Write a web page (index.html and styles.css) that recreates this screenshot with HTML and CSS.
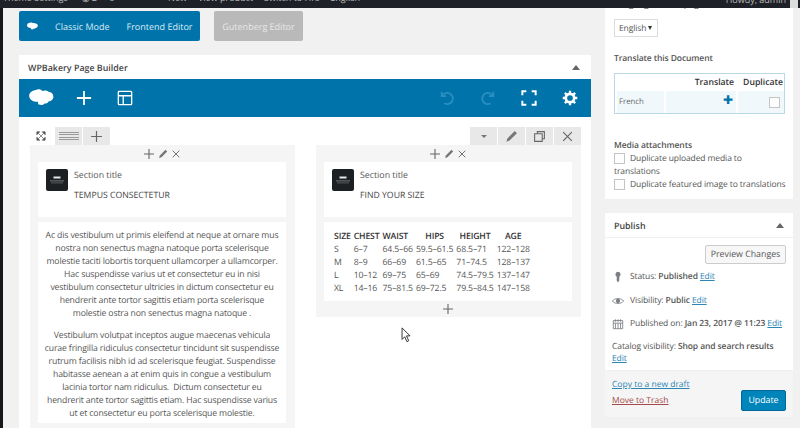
FILE: index.html
```html
<!DOCTYPE html>
<html lang="en">
<head>
<meta charset="utf-8">
<title>Edit product</title>
<link rel="stylesheet" href="styles.css">
</head>
<body>
<svg width="0" height="0" class="defs">
  <symbol id="cloud" viewBox="0 0 26 20"><path d="M7 1c2.500-1.300 5.500-.8 7 1 2-1 5-.6 6.500 1 3 .2 5 2.400 5 5.200 0 2.800-2.300 4.800-5 4.800-.6 2-2.500 2.600-4 2-1 1.500-3.500 2.500-6 1.400-2-.2-.5-2.600-1.500-3C4 13.400 0 11 0 7c0-3 3-5.500 7-6z"/></symbol>
  <symbol id="pencil" viewBox="0 0 12 12"><path d="M9 1l2 2-6.800 6.800-2.900 1 .9-3z"/></symbol>
  <symbol id="plus" viewBox="0 0 12 12"><path d="M6 1v10M1 6h10" fill="none" stroke="currentColor" stroke-width="1.100"/></symbol>
  <symbol id="cross" viewBox="0 0 12 12"><path d="M2 2l8 8M10 2l-8 8" fill="none" stroke="currentColor" stroke-width="1.100"/></symbol>
  <symbol id="tile" viewBox="0 0 22 22"><rect width="22" height="22" rx="2" fill="#1d2022"/><rect x="7.500" y="7.500" width="7" height="2" fill="#e6e6e6"/><rect x="4" y="11.500" width="14" height=".8" fill="#8a8a8a"/><rect x="5" y="13.500" width="12" height=".8" fill="#666"/></symbol>
</svg>

<div class="adminbar">
  <div class="ab-left"><span class="ab-theme">Theme Settings</span><span class="ab-count">◉ 2 ✎ 0</span><span>+ New</span><span>View product</span><span>Switch to Hrs</span><span>English</span></div>
  <div class="ab-right"><span>Howdy, admin</span><i class="avatar"></i></div>
</div>
<div class="edgebar"></div>

<div class="layout">
  <main class="main">
    <div class="modes">
      <div class="mode-blue">
        <svg class="mode-logo"><use href="#cloud"/></svg>
        <span>Classic Mode</span><span>Frontend Editor</span>
      </div>
      <div class="mode-gray">Gutenberg Editor</div>
    </div>

    <section class="builder">
      <header class="builder-head"><h2>WPBakery Page Builder</h2><span class="tri"></span></header>
      <div class="toolbar">
        <div class="tools">
          <svg class="tb-logo" fill="#fff"><use href="#cloud"/></svg>
          <svg class="tb-ic" viewBox="0 0 18 18"><path d="M9 1v16M1 9h16" stroke="#fff" stroke-width="2" fill="none"/></svg>
          <svg class="tb-ic tb-layout" viewBox="0 0 18 18"><path d="M2.500 1.500h13a1 1 0 0 1 1 1v13a1 1 0 0 1-1 1h-13a1 1 0 0 1-1-1v-13a1 1 0 0 1 1-1zM1.500 6.500h15M7 6.500v10" stroke="#fff" stroke-width="1.500" fill="none"/></svg>
        </div>
        <div class="tools tools-right">
          <svg class="tb-ic dim" viewBox="0 0 18 18"><path d="M3 2v5h5M3.500 7A6.300 6.300 0 1 1 6 15" stroke="#2a8fc0" stroke-width="2" fill="none"/></svg>
          <svg class="tb-ic dim" viewBox="0 0 18 18"><path d="M15 2v5h-5M14.500 7A6.300 6.300 0 1 0 12 15" stroke="#2a8fc0" stroke-width="2" fill="none"/></svg>
          <svg class="tb-ic" viewBox="0 0 18 18"><path d="M1.500 6V1.500H6M12 1.500h4.500V6M16.500 12v4.500H12M6 16.500H1.500V12" stroke="#fff" stroke-width="2.200" fill="none"/></svg>
          <svg class="tb-ic" viewBox="0 0 18 18"><circle cx="9" cy="9" r="4.700" fill="none" stroke="#fff" stroke-width="3"/><path d="M9 .8v3M9 14.200v3M.8 9h3M14.200 9h3M3.200 3.200l2.100 2.100M12.700 12.700l2.100 2.100M14.800 3.200l-2.100 2.100M5.300 12.700l-2.100 2.100" stroke="#fff" stroke-width="2.600"/></svg>
        </div>
      </div>

      <div class="canvas">
        <div class="row-controls">
          <div class="rc-left">
            <svg class="rc-expand" viewBox="0 0 12 12"><path d="M1 1h3.500L1 4.500zM11 1v3.500L7.500 1zM1 11V7.500L4.500 11zM11 11H7.500L11 7.500zM3 3l6 6M9 3l-6 6" fill="#555" stroke="#555" stroke-width=".8"/></svg>
            <span class="rc-btn rc-wide"><i class="bars"></i><i class="bars"></i></span>
            <span class="rc-btn"><svg class="ic13"><use href="#plus"/></svg></span>
          </div>
          <div class="rc-right">
            <span class="rc-btn"><i class="caret"></i></span>
            <span class="rc-btn"><svg class="ic13 gray-fill"><use href="#pencil"/></svg></span>
            <span class="rc-btn"><svg class="ic13" viewBox="0 0 12 12"><path d="M4 3V1.500h6.500V8H9M1.500 3.500H8.500V10.500H1.500z" fill="none" stroke="currentColor"/></svg></span>
            <span class="rc-btn"><svg class="ic13"><use href="#cross"/></svg></span>
          </div>
        </div>

        <div class="columns">
          <div class="col col-left">
            <div class="col-tools"><svg class="ic12"><use href="#plus"/></svg><svg class="ic10 gray-fill"><use href="#pencil"/></svg><svg class="ic10"><use href="#cross"/></svg></div>
            <div class="card title-card">
              <svg class="tile"><use href="#tile"/></svg>
              <div><div class="sec-name">Section title</div><div class="sec-sub">TEMPUS CONSECTETUR</div></div>
            </div>
            <div class="card text-card">
              <p>Ac dis vestibulum ut primis eleifend at neque at ornare mus nostra non senectus magna natoque porta scelerisque molestie taciti lobortis torquent ullamcorper a ullamcorper. Hac suspendisse varius ut et consectetur eu in nisi vestibulum consectetur ultricies in dictum consectetur eu hendrerit ante tortor sagittis etiam porta scelerisque molestie ostra non senectus magna natoque .</p>
              <p>Vestibulum volutpat inceptos augue maecenas vehicula curae fringilla ridiculus consectetur tincidunt sit suspendisse rutrum facilisis nibh id ad scelerisque feugiat. Suspendisse habitasse aenean a at enim quis in congue a vestibulum lacinia tortor nam ridiculus.&nbsp; Dictum consectetur eu hendrerit ante tortor sagittis etiam. Hac suspendisse varius ut et consectetur eu porta scelerisque molestie.</p>
            </div>
          </div>

          <div class="col col-right">
            <div class="col-tools"><svg class="ic12"><use href="#plus"/></svg><svg class="ic10 gray-fill"><use href="#pencil"/></svg><svg class="ic10"><use href="#cross"/></svg></div>
            <div class="card title-card">
              <svg class="tile"><use href="#tile"/></svg>
              <div><div class="sec-name">Section title</div><div class="sec-sub">FIND YOUR SIZE</div></div>
            </div>
            <div class="card table-card">
              <table class="sizes">
                <tr><th>SIZE</th><th>CHEST</th><th>WAIST</th><th class="c">HIPS</th><th class="c">HEIGHT</th><th class="c">AGE</th></tr>
                <tr><td>S</td><td>6–7</td><td>64.5–66</td><td>59.5–61.5</td><td>68.5–71</td><td>122–128</td></tr>
                <tr><td>M</td><td>8–9</td><td>66–69</td><td>61.5–65</td><td>71–74.5</td><td>128–137</td></tr>
                <tr><td>L</td><td>10–12</td><td>69–75</td><td>65–69</td><td>74.5–79.5</td><td>137–147</td></tr>
                <tr><td>XL</td><td>14–16</td><td>75–81.5</td><td>69–72.5</td><td>79.5–84.5</td><td>147–158</td></tr>
              </table>
            </div>
            <div class="col-foot"><svg class="ic12"><use href="#plus"/></svg></div>
          </div>
        </div>
      </div>
    </section>
  </main>

  <aside class="side">
    <section class="box box-lang">
      <div class="lang-label">Language of this page</div>
      <div class="select"><span>English</span><i class="sel-arrow"></i></div>
      <h3 class="side-h first">Translate this Document</h3>
      <div class="trans">
        <div class="trans-head"><span>Translate</span><span>Duplicate</span></div>
        <div class="trans-row">
          <span class="cell fr">French</span>
          <span class="cell t-plus">✚</span>
          <span class="cell t-check"><i class="chk"></i></span>
        </div>
      </div>
      <h3 class="side-h media">Media attachments</h3>
      <div class="opt"><i class="chk"></i>Duplicate uploaded media to</div>
      <div class="opt-cont">translations</div>
      <div class="opt"><i class="chk"></i>Duplicate featured image to translations</div>
    </section>

    <section class="box box-pub">
      <header class="pub-head"><h2>Publish</h2><span class="tri"></span></header>
      <div class="pub-body">
        <div class="preview-row"><span class="btn-preview">Preview Changes</span></div>
        <div class="pub-line l-status">
          <svg class="pub-ic" viewBox="0 0 14 14"><path d="M7 1a3 3 0 0 1 1.500 5.600V11L7 13.500 5.500 11V6.600A3 3 0 0 1 7 1z" fill="#7a7f84"/></svg>
          <span>Status: <b>Published</b> <a>Edit</a></span>
        </div>
        <div class="pub-line l-vis">
          <svg class="pub-ic" viewBox="0 0 14 14"><path d="M.5 7C3 3.200 11 3.200 13.500 7 11 10.800 3 10.800.5 7z" fill="none" stroke="#7a7f84"/><circle cx="7" cy="7" r="2.500" fill="#7a7f84"/></svg>
          <span>Visibility: <b>Public</b> <a>Edit</a></span>
        </div>
        <div class="pub-line l-date">
          <svg class="pub-ic" viewBox="0 0 14 14"><path d="M1.500 3h11v9.500h-11zM1.500 6h11M4 1.500v3M7 1.500v3M10 1.500v3M4 6v6.500M7 6v6.500M10 6v6.500" fill="none" stroke="#7a7f84"/></svg>
          <span>Published on: <b>Jan 23, 2017 @ 11:23</b> <a>Edit</a></span>
        </div>
        <div class="pub-cat">Catalog visibility: <b>Shop and search results</b><br><a>Edit</a></div>
      </div>
      <footer class="pub-foot">
        <div class="foot-links"><a>Copy to a new draft</a><a class="trash">Move to Trash</a></div>
        <span class="btn-update">Update</span>
      </footer>
    </section>
  </aside>
</div>

<svg class="cursor" viewBox="0 0 12 18" width="11" height="16"><path d="M1 1v13l3-3 2.500 5.500 2-1L6 10h4z" fill="#fff" stroke="#222" stroke-width="1"/></svg>
</body>
</html>
```
FILE: styles.css
```css
* { box-sizing: border-box; }
html, body { margin: 0; height: 428px; overflow: hidden; }
body { background: #f1f1f1; color: #444; font: 8.800px/13px "Open Sans", sans-serif; text-rendering: geometricPrecision; }
.defs { position: absolute; }
a { color: #2b86b3; text-decoration: underline; }

.adminbar { position: absolute; top: 0; left: 0; width: 800px; height: 8px; background: #1e2127; color: #bbb; font-size: 9px; line-height: 11px; display: flex; justify-content: space-between; align-items: flex-end; padding: 0 2px 0 3px; overflow: hidden; z-index: 5; }
.ab-left { display: flex; gap: 11px; white-space: nowrap; height: 8px; align-items: flex-end; }
.ab-left span { display: block; transform: translateY(-5px); }
.ab-count { margin-left: 3px; width: 68px; }
.ab-right { display: flex; gap: 4px; align-items: flex-end; height: 8px; white-space: nowrap; }
.ab-right span { display: block; transform: translateY(-3px); }
.avatar { display: block; width: 8px; height: 8px; background: #ddd; }
.edgebar { position: absolute; top: 0; left: 0; width: 3px; height: 428px; background: #15171a; z-index: 4; }

.layout { display: flex; height: 428px; padding-left: 19px; }
.main { width: 572px; padding-top: 11px; flex: none; }
.side { width: 188px; margin-left: 14px; flex: none; }

.modes { display: flex; gap: 14px; height: 30px; font-size: 9px; color: #d8ecf5; white-space: nowrap; }
.mode-blue { width: 181px; background: #0073aa; border-radius: 2px; display: flex; align-items: center; gap: 17px; padding-left: 8px; }
.mode-logo { width: 11px; height: 9px; fill: #fff; flex: none; }
.mode-gray { width: 89px; background: #b9b9b9; color: #e8e8e8; border-radius: 2px; display: flex; align-items: center; justify-content: center; }

.builder { margin-top: 14px; background: #fff; height: 373px; overflow: hidden; }
.builder-head { height: 24px; display: flex; align-items: center; justify-content: space-between; padding: 0 11px 0 9px; }
.builder-head h2 { margin: 0; font-size: 8.900px; font-weight: 600; color: #444; }
.tri { width: 0; height: 0; border: 4px solid transparent; border-top: 0; border-bottom: 5px solid #666; }

.toolbar { height: 38px; background: #0073aa; display: flex; justify-content: space-between; align-items: center; padding: 0 13px 0 10px; }
.tools { display: flex; align-items: center; gap: 22px; }
.tools-right { gap: 25px; }
.tb-logo { width: 25px; height: 19px; }
.tb-ic { width: 16px; height: 16px; display: block; }
.tb-layout { margin-left: 3px; }

.canvas { padding: 10px 10px 0 11px; }
.row-controls { height: 18px; display: flex; justify-content: space-between; color: #666; }
.rc-left, .rc-right { display: flex; gap: 1px; align-items: stretch; }
.rc-expand { width: 10px; height: 10px; margin: 4px 8px 0 6px; }
.rc-btn { width: 27px; height: 18px; background: #e8e8e8; display: flex; align-items: center; justify-content: center; }
.rc-wide { flex-direction: column; gap: 2px; }
.bars { display: block; width: 20px; height: 3px; border-top: 1px solid #999; border-bottom: 1px solid #999; }
.caret { width: 0; height: 0; border: 3px solid transparent; border-bottom: 0; border-top: 3px solid #777; }
.ic13 { width: 13px; height: 13px; color: #666; }
.ic12 { width: 12px; height: 12px; color: #666; }
.ic10 { width: 10px; height: 10px; color: #666; }
.gray-fill { fill: #777; }

.columns { display: flex; gap: 21px; align-items: flex-start; }
.col { width: 265px; background: #f5f5f5; padding: 0 9px 0 8px; }
.col-left { height: 283px; }
.col-tools { height: 17px; display: flex; align-items: center; justify-content: center; gap: 3px; }
.card { background: #fff; }
.title-card { height: 55px; display: flex; gap: 6px; padding: 7px 8px; margin-bottom: 5px; }
.tile { width: 22px; height: 22px; flex: none; }
.sec-name { line-height: 13px; color: #555; }
.sec-sub { line-height: 13px; color: #444; margin-top: 7px; font-size: 8.700px; }
.text-card { padding: 7px 5px; text-align: center; height: 201px; font-size: 8.700px; letter-spacing: -.15px; color: #555; }
.text-card p { margin: 0 0 9px; }
.table-card { height: 79px; padding: 8px 10px; }
.sizes { border-collapse: collapse; font-size: 8.700px; letter-spacing: -.15px; color: #555; }
.sizes th, .sizes td { padding: 0; line-height: 13px; height: 13px; text-align: left; white-space: nowrap; padding-right: 3px; }
.sizes th { color: #333; font-weight: 600; }
.sizes th.c { text-align: center; }
.col-foot { height: 16px; display: flex; align-items: center; justify-content: center; }

.box { background: #fff; margin-bottom: 14px; }
.box-lang { height: 199px; padding: 1px 9px 0; }
.lang-label { height: 18px; line-height: 7px; }
.select { width: 44px; height: 18px; border: 1px solid #ddd; display: flex; align-items: center; justify-content: space-between; padding: 0 5px 0 4px; color: #555; font-size: 8.500px; letter-spacing: -.1px; }
.sel-arrow { width: 0; height: 0; border: 2.500px solid transparent; border-bottom: 0; border-top: 4px solid #333; }
.side-h { margin: 0; font-size: 8.500px; font-weight: 600; letter-spacing: -.1px; color: #555; line-height: 13px; }
.first { margin-top: 15px; }
.trans { width: 171px; height: 41px; margin-top: 8px; border: 1px solid #b9d8e8; }
.trans-head { height: 17px; display: flex; justify-content: flex-end; gap: 9px; align-items: center; padding-right: 1px; font-weight: 600; font-size: 8.700px; color: #333; }
.trans-row { height: 22px; display: grid; grid-template-columns: 47px 1fr 46px; gap: 2px; padding-left: 2px; font-size: 7.800px; color: #666; }
.cell { background: #f1f8fc; display: flex; align-items: center; }
.fr { padding-left: 2px; }
.t-plus { color: #0073aa; font-size: 12px; justify-content: flex-end; padding: 0 3px 5px 0; }
.t-check { justify-content: flex-end; padding-right: 4px; }
.chk { display: block; width: 11px; height: 11px; border: 1px solid #c4c4c4; background: #fdfdfd; flex: none; }
.media { margin-top: 25px; }
.opt { display: flex; gap: 5px; align-items: center; height: 13px; font-size: 8.500px; letter-spacing: -.1px; white-space: nowrap; color: #555; }
.opt-cont { height: 13px; font-size: 8.500px; letter-spacing: -.1px; color: #555; }
.opt .chk { margin-top: -1px; }

.box-pub { height: 204px; }
.pub-head { height: 25px; display: flex; align-items: center; justify-content: space-between; padding: 0 9px; border-bottom: 1px solid #eee; }
.pub-head h2 { margin: 0; font-size: 8.900px; font-weight: 600; color: #444; }
.pub-body { padding: 7px 7px 0; font-size: 8.500px; letter-spacing: -.1px; height: 132px; color: #555; }
.preview-row { display: flex; justify-content: flex-end; }
.btn-preview { width: 81px; height: 19px; border: 1px solid #ccc; background: #f7f7f7; border-radius: 2px; display: flex; align-items: center; justify-content: center; color: #555; font-size: 8.800px; letter-spacing: 0; }
.pub-line { display: flex; gap: 6px; align-items: center; height: 13px; white-space: nowrap; }
.pub-ic { width: 12px; height: 12px; flex: none; }
.l-status { margin-top: 6px; }
.l-vis { margin-top: 11px; }
.l-date { margin-top: 10px; }
.pub-cat { margin-top: 11px; white-space: nowrap; line-height: 12px; }
b { font-weight: 600; }
.pub-foot { height: 47px; background: #f5f5f5; border-top: 1px solid #eee; padding: 7px 7px 0 7px; display: flex; justify-content: space-between; align-items: flex-start; font-size: 8.500px; }
.foot-links { display: flex; flex-direction: column; gap: 3px; }
.trash { color: #a54a4a; }
.btn-update { width: 45px; height: 21px; margin-top: 12px; background: #0085ba; border: 1px solid #006799; border-radius: 2px; color: #fff; display: flex; align-items: center; justify-content: center; font-size: 8.800px; }

.cursor { position: absolute; left: 401px; top: 327px; z-index: 6; }
```
